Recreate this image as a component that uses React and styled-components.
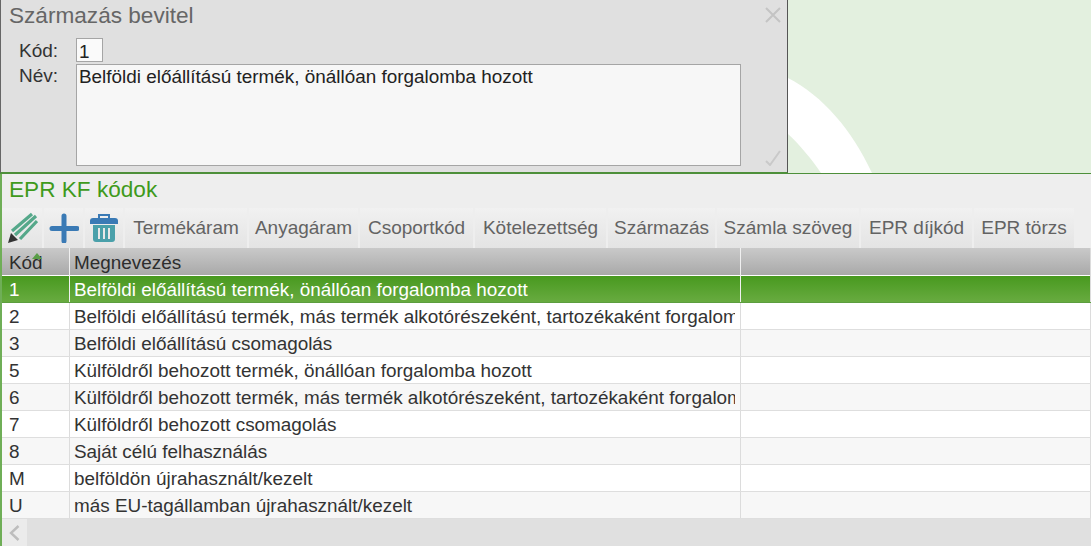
import React from "react";
import styled, { createGlobalStyle } from "styled-components";

const GlobalStyle = createGlobalStyle`
  html, body { margin: 0; padding: 0; }
  body { font-family: "Liberation Sans", Arial, sans-serif; background: #eeeeee; overflow: hidden; }
`;

const Page = styled.div`
  width: 1091px;
  height: 546px;
  display: flex;
  flex-direction: column;
  overflow: hidden;
`;
const TopArea = styled.div`
  height: 173px;
  flex: none;
  display: flex;
  background: #e3f0df;
  border-bottom: 1px solid #4d8f3a;
  overflow: hidden;
`;
const Dialog = styled.div`
  width: 786px;
  flex: none;
  background: #e0e0e0;
  border-left: 1px solid #666;
  border-right: 1px solid #555;
  border-bottom: 1px solid #4d8f3a;
  display: flex;
  flex-direction: column;
  position: relative;
`;
const DialogHead = styled.div`
  height: 38px;
  display: flex;
  align-items: flex-start;
  justify-content: space-between;
  padding: 0 6px 0 8px;
  flex: none;
`;
const DialogTitle = styled.div`
  font-size: 22.6px;
  line-height: 32px;
  color: #666;
`;
const CloseIcon = styled.svg`
  margin-top: 7px;
`;
const FormRow = styled.div`
  display: flex;
  align-items: flex-start;
  height: ${(p) => p.$h}px;
  margin-bottom: 2px;
`;
const FormLabel = styled.div`
  width: 75px;
  padding-left: 18px;
  box-sizing: border-box;
  font-size: 19px;
  line-height: ${(p) => p.$lh}px;
  color: #333;
`;
const Field = styled.div`
  box-sizing: border-box;
  background: ${(p) => (p.$area ? "#f7f7f7" : "#fafafa")};
  border: 1px solid #a5a5a5;
  color: #222;
  font-size: 18.9px;
  line-height: ${(p) => (p.$area ? 23 : 25)}px;
  padding: 0 2px;
  width: ${(p) => p.$w}px;
  height: 100%;
`;
const DialogFoot = styled.div`
  position: absolute;
  right: 6px;
  bottom: 6px;
  line-height: 0;
`;
const Arc = styled.svg`
  flex: 1;
  display: block;
`;
const Section = styled.div`
  flex: 1;
  display: flex;
  flex-direction: column;
  border-left: 2px solid #6fae57;
  min-height: 0;
`;
const SectionTitle = styled.div`
  height: 34px;
  flex: none;
  font-size: 22.6px;
  line-height: 32px;
  color: #3f9a1c;
  padding-left: 7px;
`;
const Toolbar = styled.div`
  height: 40px;
  flex: none;
  display: flex;
  gap: 2px;
`;
const Tool = styled.div`
  height: 40px;
  box-sizing: border-box;
  display: flex;
  align-items: center;
  justify-content: center;
  background: linear-gradient(#f1f1f1, #e4e4e4);
  color: #636363;
  font-size: 19px;
  width: ${(p) => p.$w}px;
  flex: none;
`;
const Row = styled.div`
  display: grid;
  grid-template-columns: 68px 671px 1fr;
  height: 27px;
  flex: none;
  box-sizing: border-box;
  color: ${(p) => (p.$sel ? "#fff" : "#333")};
  border-bottom: 1px solid ${(p) => (p.$sel ? "#5c9e3f" : "#dedede")};
  background: ${(p) =>
    p.$sel
      ? "linear-gradient(#48991f, #68ab40)"
      : p.$even
      ? "#f7f7f7"
      : "#fff"};
`;
const HeadRow = styled(Row)`
  height: 28px;
  background: linear-gradient(#c9c9c9, #a9a9a9);
  border-bottom: 1px solid #fff;
  color: #2d2d2d;
`;
const Cell = styled.div`
  padding: 1px 5px 0 ${(p) => (p.$first ? 7 : 4)}px;
  border-right: 1px solid ${(p) => (p.$light ? "#f0f0f0" : "#dcdcdc")};
  position: relative;
`;
const CellText = styled.div`
  font-size: 18.9px;
  line-height: 25px;
  white-space: nowrap;
  overflow: hidden;
`;
const HeadText = styled(CellText)`
  line-height: 27px;
`;
const SortMark = styled.span`
  position: absolute;
  left: 30px;
  top: 5px;
  width: 0;
  height: 0;
  border-left: 5px solid transparent;
  border-right: 5px solid transparent;
  border-bottom: 6px solid #5a9e48;
`;
const ScrollBar = styled.div`
  flex: 1;
  background: #e0e0e0;
  display: flex;
`;
const ScrollLeft = styled.div`
  width: 25px;
  background: #ebebeb;
  display: flex;
  align-items: center;
  justify-content: center;
`;

const rows = [
  ["1", "Belföldi előállítású termék, önállóan forgalomba hozott"],
  ["2", "Belföldi előállítású termék, más termék alkotórészeként, tartozékaként forgalomba hozott"],
  ["3", "Belföldi előállítású csomagolás"],
  ["5", "Külföldről behozott termék, önállóan forgalomba hozott"],
  ["6", "Külföldről behozott termék, más termék alkotórészeként, tartozékaként forgalomba hozott"],
  ["7", "Külföldről behozott csomagolás"],
  ["8", "Saját célú felhasználás"],
  ["M", "belföldön újrahasznált/kezelt"],
  ["U", "más EU-tagállamban újrahasznált/kezelt"],
];

const tabs = [
  ["Termékáram", 122],
  ["Anyagáram", 109],
  ["Csoportkód", 113],
  ["Kötelezettség", 131],
  ["Származás", 107],
  ["Számla szöveg", 142],
  ["EPR díjkód", 111],
  ["EPR törzs", 100],
];

export default function App() {
  return (
    <Page>
      <GlobalStyle />
      <TopArea>
        <Dialog>
          <DialogHead>
            <DialogTitle>Származás bevitel</DialogTitle>
            <CloseIcon width="16" height="16" viewBox="0 0 16 16">
              <path d="M1 1L15 15M15 1L1 15" stroke="#c4c4c4" strokeWidth="2" fill="none" />
            </CloseIcon>
          </DialogHead>
          <FormRow $h={24}>
            <FormLabel $lh={26}>Kód:</FormLabel>
            <Field $w={27}>1</Field>
          </FormRow>
          <FormRow $h={102}>
            <FormLabel $lh={24}>Név:</FormLabel>
            <Field $area $w={665}>Belföldi előállítású termék, önállóan forgalomba hozott</Field>
          </FormRow>
          <DialogFoot>
            <svg width="16" height="16" viewBox="0 0 16 16">
              <path d="M1 11L5 15L15 1" stroke="#c9c9c9" strokeWidth="2" fill="none" />
            </svg>
          </DialogFoot>
        </Dialog>
        <Arc viewBox="0 0 303 173" preserveAspectRatio="none">
          <path d="M0 78C35 96 64 130 84 173L33 173C24 160 13 146 0 134Z" fill="#fff" />
        </Arc>
      </TopArea>
      <Section>
        <SectionTitle>EPR KF kódok</SectionTitle>
        <Toolbar>
          <Tool $w={40}>
            <svg width="32" height="32" viewBox="0 0 32 32">
              <path d="M6 19L26 2M9 23L30 4M14 27L31 9" fill="none" stroke="#55a88a" strokeWidth="3.2" />
              <path d="M2 31L5 21L12 28Z" fill="#333" />
            </svg>
          </Tool>
          <Tool $w={39}>
            <svg width="30" height="30" viewBox="0 0 30 30">
              <path d="M15 3V28M3 15.5H28" stroke="#3a7ab5" strokeWidth="5" strokeLinecap="round" />
            </svg>
          </Tool>
          <Tool $w={38}>
            <svg width="30" height="30" viewBox="0 0 30 30">
              <path d="M1 11V8Q1 5 4 5H26Q29 5 29 8V11Z" fill="#3a7ab5" />
              <path d="M10 5V2H20V5" fill="none" stroke="#3a7ab5" strokeWidth="2" />
              <path d="M4 12H26V26Q26 29 23 29H7Q4 29 4 26Z" fill="#4aa0aa" />
              <path d="M10 15V26M15 15V26M20 15V26" stroke="#e8e8e8" strokeWidth="2" />
            </svg>
          </Tool>
          {tabs.map(([label, w]) => (
            <Tool key={label} $w={w}>{label}</Tool>
          ))}
        </Toolbar>
        <HeadRow>
          <Cell $first $light><HeadText>Kód</HeadText><SortMark /></Cell>
          <Cell $light><HeadText>Megnevezés</HeadText></Cell>
          <Cell />
        </HeadRow>
        {rows.map(([code, name], i) => (
          <Row key={code} $sel={i === 0} $even={i % 2 === 0}>
            <Cell $first $light={i === 0}><CellText>{code}</CellText></Cell>
            <Cell $light={i === 0}><CellText>{name}</CellText></Cell>
            <Cell />
          </Row>
        ))}
        <ScrollBar>
          <ScrollLeft>
            <svg width="11" height="16" viewBox="0 0 11 16">
              <path d="M9.5 1L2 8L9.5 15" stroke="#bdbdbd" strokeWidth="2.4" fill="none" />
            </svg>
          </ScrollLeft>
        </ScrollBar>
      </Section>
    </Page>
  );
}
